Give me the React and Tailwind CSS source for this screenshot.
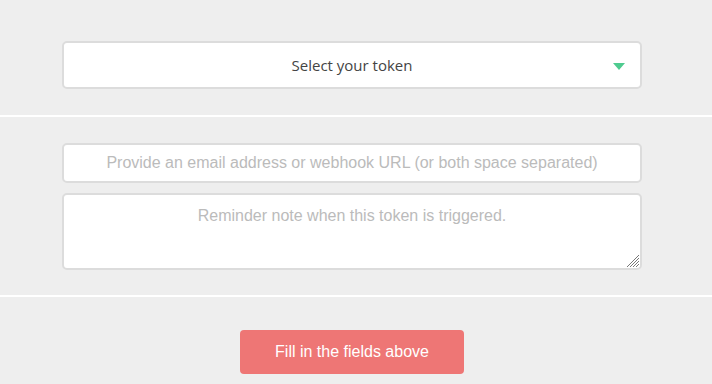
import React from 'react';

// Green caret for the token picker
const CaretDown = ({ className }) => (
  <svg viewBox="0 0 12 7" className={className}><polygon points="0,0 12,0 6,7" fill="currentColor" /></svg>
);

// Hatched resize grip, as the old browser drew it
const Grip = ({ className }) => (
  <svg viewBox="0 0 12 12" className={className} stroke="#777" strokeWidth="1">
    <line x1="12" y1="0" x2="0" y2="12" />
    <line x1="12" y1="3" x2="3" y2="12" />
    <line x1="12" y1="6" x2="6" y2="12" />
    <line x1="12" y1="9" x2="9" y2="12" />
  </svg>
);

export default function App() {
  return (
    <div className="w-[712px] h-[384px] bg-[#eeeeee] overflow-hidden font-['Liberation_Sans',Arial,sans-serif]">
      {/* Token select */}
      <div className="pt-[41px] pb-[26px] border-b-2 border-white">
        <div className="ml-[62px] w-[580px] h-[48px] bg-white border-2 border-[#dcdcdc] rounded-[5px] flex items-center justify-center relative">
          <span className="font-['Open_Sans',sans-serif] text-[15px] text-[#444444] pt-[1px]">Select your token</span>
          <CaretDown className="absolute right-[15px] top-[20px] w-[12px] h-[7px] text-[#4ecb8f]" />
        </div>
      </div>

      {/* Alert details */}
      <div className="pt-[26px] pb-[25px] border-b-2 border-white">
        <div className="ml-[62px] w-[580px] flex flex-col gap-[10px]">
          <input
            type="text"
            placeholder="Provide an email address or webhook URL (or both space separated)"
            className="h-[40px] w-full bg-white border-2 border-[#dcdcdc] rounded-[5px] text-center text-[16px] text-[#444] placeholder:text-[#bbbbbb] outline-none"
          />
          <div className="relative">
            <textarea
              placeholder="Reminder note when this token is triggered."
              className="block h-[77px] w-full bg-white border-2 border-[#dcdcdc] rounded-[5px] text-center text-[16px] text-[#444] placeholder:text-[#bbbbbb] pt-[9px] outline-none resize-none"
            />
            <Grip className="absolute right-[3px] bottom-[3px] w-[12px] h-[12px] pointer-events-none" />
          </div>
        </div>
      </div>

      {/* Submit */}
      <div className="pt-[33px] flex">
        <button className="ml-[240px] w-[224px] h-[44px] bg-[#ee7675] rounded-[4px] text-white text-[16px]">
          Fill in the fields above
        </button>
      </div>
    </div>
  );
}
